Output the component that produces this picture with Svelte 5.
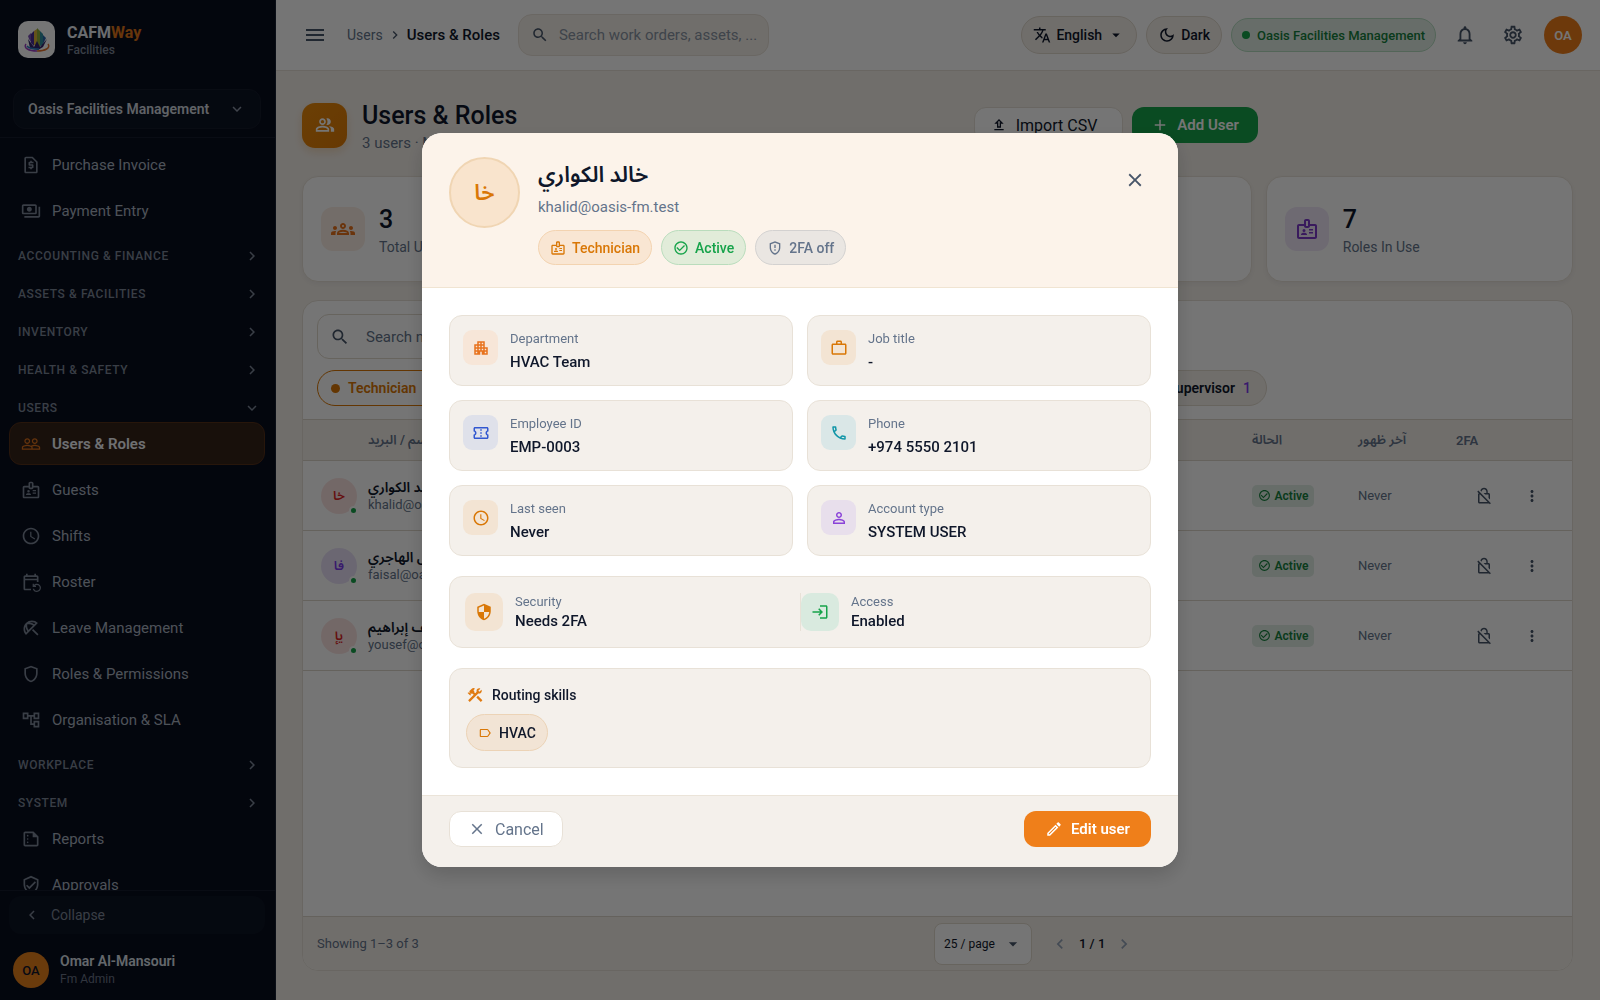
<script lang="ts">
  const icons: Record<string, string> = {
    invoice: 'M14 2H6C4.900 2 4 2.900 4 4v16c0 1.100.900 2 2 2h12c1.100 0 2-.900 2-2V8zM18 20H6V4h7.170L18 8.830zM11 17h2v-1h1c.550 0 1-.450 1-1v-3c0-.550-.450-1-1-1h-3v-1h4V8h-2V7h-2v1h-1c-.550 0-1 .450-1 1v3c0 .550.450 1 1 1h3v1H9v2h2z',
    payments: 'M19 14V6c0-1.100-.900-2-2-2H3c-1.100 0-2 .900-2 2v8c0 1.100.900 2 2 2h14c1.100 0 2-.900 2-2zm-2 0H3V6h14v8zm-7-7c-1.660 0-3 1.340-3 3s1.340 3 3 3 3-1.340 3-3-1.340-3-3-3zm13 0v11c0 1.100-.900 2-2 2H4v-2h17V7h2z',
    people: 'M16.500 13c-1.200 0-3.070.340-4.500 1-1.430-.670-3.300-1-4.500-1C5.330 13 1 14.080 1 16.250V19h22v-2.750c0-2.170-4.330-3.250-6.500-3.250zm-4 4.500h-10v-1.250c0-.540 2.560-1.750 5-1.750s5 1.210 5 1.750v1.250zm9 0H14v-1.250c0-.460-.200-.860-.520-1.220.880-.300 1.960-.530 3.020-.530 2.440 0 5 1.210 5 1.750v1.250zM7.500 12c1.930 0 3.500-1.570 3.500-3.500S9.430 5 7.500 5 4 6.570 4 8.500 5.570 12 7.500 12zm0-5.500c1.100 0 2 .900 2 2s-.900 2-2 2-2-.900-2-2 .900-2 2-2zm9 5.500c1.930 0 3.500-1.570 3.500-3.500S18.430 5 16.500 5 13 6.570 13 8.500s1.570 3.500 3.500 3.500zm0-5.500c1.100 0 2 .900 2 2s-.900 2-2 2-2-.900-2-2 .900-2 2-2z',
    peopleAlt: 'M16.670 13.130C18.040 14.060 19 15.320 19 17v3h4v-3c0-2.180-3.570-3.470-6.330-3.870zM15 12c2.210 0 4-1.790 4-4s-1.790-4-4-4c-.470 0-.910.100-1.330.240C14.500 5.270 15 6.580 15 8s-.500 2.730-1.330 3.760c.420.140.860.240 1.330.240zM9 12c2.210 0 4-1.790 4-4s-1.790-4-4-4-4 1.790-4 4 1.790 4 4 4zm0-6c1.100 0 2 .900 2 2s-.900 2-2 2-2-.900-2-2 .900-2 2-2zm0 7c-2.670 0-8 1.340-8 4v3h16v-3c0-2.660-5.330-4-8-4zm6 5H3v-.990C3.200 16.290 6.300 15 9 15s5.800 1.290 6 2v1z',
    groups: 'M4 13c1.100 0 2-.900 2-2s-.900-2-2-2-2 .900-2 2 .900 2 2 2zm1.130 1.100C4.760 14.040 4.390 14 4 14c-.990 0-1.930.210-2.780.580C.480 14.900 0 15.620 0 16.430V18h4.500v-1.610c0-.830.230-1.610.630-2.290zM20 13c1.100 0 2-.900 2-2s-.900-2-2-2-2 .900-2 2 .900 2 2 2zm4 3.430c0-.810-.480-1.530-1.220-1.850-.850-.370-1.790-.580-2.780-.580-.390 0-.760.040-1.130.100.400.680.630 1.460.630 2.290V18H24v-1.570zm-7.760-2.780c-1.170-.520-2.610-.900-4.240-.900-1.630 0-3.070.390-4.240.900C6.680 14.130 6 15.210 6 16.390V18h12v-1.610c0-1.180-.680-2.260-1.760-2.740zM8.070 16c.090-.230.130-.390.910-.690.970-.380 1.990-.560 3.020-.560s2.050.180 3.020.560c.770.300.810.460.910.690H8.070zM12 8c.550 0 1 .450 1 1s-.450 1-1 1-1-.450-1-1 .450-1 1-1m0-2c-1.660 0-3 1.340-3 3s1.340 3 3 3 3-1.340 3-3-1.340-3-3-3z',
    badge: 'M20 7h-5V4c0-1.100-.900-2-2-2h-2c-1.100 0-2 .900-2 2v3H4c-1.100 0-2 .900-2 2v11c0 1.100.900 2 2 2h16c1.100 0 2-.900 2-2V9c0-1.100-.900-2-2-2zm-9-3h2v5h-2V4zm9 16H4V9h5c0 1.100.900 2 2 2h2c1.100 0 2-.900 2-2h5v11zM9 15a1.500 1.500 0 1 0 0-3 1.500 1.500 0 0 0 0 3zm2.080 1.180c-.640-.280-1.340-.430-2.080-.430s-1.440.150-2.080.430c-.560.240-.920.780-.920 1.390V18h6v-.430c0-.610-.360-1.150-.920-1.390zM14 15h4v1.500h-4zM14 12h4v1.500h-4z',
    clock: 'M11.990 2C6.470 2 2 6.480 2 12s4.470 10 9.990 10C17.520 22 22 17.520 22 12S17.520 2 11.990 2zM12 20c-4.420 0-8-3.580-8-8s3.580-8 8-8 8 3.580 8 8-3.580 8-8 8zm.500-13H11v6l5.250 3.150.750-1.230-4.500-2.670z',
    roster: 'M21 12V6c0-1.100-.900-2-2-2h-1V2h-2v2H8V2H6v2H5C3.900 4 3 4.900 3 6v14c0 1.100.900 2 2 2h7v-2H5V10h14v2h2zm-2-4H5V6h14v2zm-3.360 12c.430 1.450 1.770 2.500 3.360 2.500 1.930 0 3.500-1.570 3.500-3.500s-1.570-3.500-3.500-3.500c-.950 0-1.820.380-2.450 1H18V18h-4v-4h1.500v1.430C16.400 14.550 17.640 14 19 14c2.760 0 5 2.240 5 5s-2.240 5-5 5c-2.420 0-4.440-1.720-4.900-4h1.540z',
    leave: 'M21 19.570l-1.427 1.428-6.442-6.442 1.430-1.428zM13.120 3c-2.580 0-5.160.980-7.140 2.950l-.010.010c-3.950 3.950-3.950 10.360 0 14.310l14.300-14.310C18.300 3.990 15.710 3 13.120 3zM6.140 17.270C5.400 16.030 5 14.610 5 13.120c0-.930.160-1.820.460-2.670.190 1.910.890 3.790 2.070 5.440l-1.390 1.380zm2.840-2.840C7.630 12.380 7.120 9.930 7.600 7.600c.580-.120 1.160-.180 1.750-.180 1.800 0 3.550.550 5.080 1.560l-5.450 5.450zm1.470-8.970c.850-.300 1.740-.460 2.670-.460 1.490 0 2.910.400 4.150 1.140l-1.390 1.390c-1.650-1.180-3.520-1.880-5.430-2.070z',
    shield: 'M12 2 4 5v6.090c0 5.050 3.410 9.760 8 10.910 4.590-1.150 8-5.860 8-10.910V5l-8-3zm6 9.090c0 4-2.550 7.700-6 8.830-3.450-1.130-6-4.820-6-8.830v-4.700l6-2.250 6 2.250v4.700z',
    tree: 'M22 11V3h-7v3H9V3H2v8h7V8h2v10h4v3h7v-8h-7v3h-2V8h2v3h7zM7 9H4V5h3v4zm10 6h3v4h-3v-4zm0-10h3v4h-3V5z',
    report: 'M15 3H5c-1.100 0-2 .900-2 2v14c0 1.100.900 2 2 2h14c1.100 0 2-.900 2-2V9l-6-6zM5 19V5h9v5h5v9H5zM8 7a1 1 0 1 0 0 2 1 1 0 0 0 0-2zM8 11a1 1 0 1 0 0 2 1 1 0 0 0 0-2zM8 15a1 1 0 1 0 0 2 1 1 0 0 0 0-2z',
    verified: 'M12 1L3 5v6c0 5.550 3.840 10.740 9 12 5.160-1.260 9-6.450 9-12V5l-9-4zm7 10c0 4.520-2.980 8.690-7 9.930-4.020-1.240-7-5.410-7-9.930V6.300l7-3.110 7 3.110V11zm-11.590.590L6 13l4 4 8-8-1.410-1.420L10 14.170z',
    right: 'M10 6L8.590 7.410 13.170 12l-4.580 4.590L10 18l6-6z',
    left: 'M15.410 7.410L14 6l-6 6 6 6 1.410-1.410L10.830 12z',
    down: 'M16.590 8.590L12 13.170 7.410 8.590 6 10l6 6 6-6z',
    menu: 'M3 18h18v-2H3v2zm0-5h18v-2H3v2zm0-7v2h18V6H3z',
    search: 'M15.500 14h-.790l-.280-.270C15.410 12.590 16 11.110 16 9.500 16 5.910 13.090 3 9.500 3S3 5.910 3 9.500 5.910 16 9.500 16c1.610 0 3.090-.590 4.230-1.570l.270.280v.790l5 4.990L20.490 19l-4.990-5zm-6 0C7.010 14 5 11.990 5 9.500S7.010 5 9.500 5 14 7.010 14 9.500 11.990 14 9.500 14z',
    translate: 'M12.870 15.070l-2.540-2.510.030-.030c1.740-1.940 2.980-4.170 3.710-6.530H17V4h-7V2H8v2H1v1.990h11.170C11.500 7.920 10.440 9.750 9 11.350 8.070 10.320 7.300 9.190 6.690 8h-2c.730 1.630 1.730 3.170 2.980 4.560l-5.090 5.020L4 19l5-5 3.110 3.110.760-2.040zM18.500 10h-2L12 22h2l1.120-3h4.750L21 22h2l-4.500-12zm-2.620 7l1.620-4.330L19.120 17h-3.240z',
    caret: 'M7 10l5 5 5-5z',
    moon: 'M9.370 5.510C9.190 6.150 9.100 6.820 9.100 7.500c0 4.080 3.320 7.400 7.400 7.400.680 0 1.350-.090 1.990-.270C17.450 17.190 14.930 19 12 19c-3.860 0-7-3.140-7-7 0-2.930 1.810-5.450 4.370-6.490zM12 3c-4.970 0-9 4.030-9 9s4.030 9 9 9 9-4.030 9-9c0-.460-.040-.920-.100-1.360-.980 1.370-2.580 2.260-4.400 2.260-2.980 0-5.400-2.420-5.400-5.400 0-1.810.890-3.420 2.260-4.400C12.920 3.040 12.460 3 12 3z',
    bell: 'M12 22c1.100 0 2-.900 2-2h-4c0 1.100.900 2 2 2zm6-6v-5c0-3.070-1.630-5.640-4.500-6.320V4c0-.830-.670-1.500-1.500-1.500s-1.500.670-1.500 1.500v.680C7.640 5.360 6 7.920 6 11v5l-2 2v1h16v-1l-2-2zm-2 1H8v-6c0-2.480 1.510-4.500 4-4.500s4 2.020 4 4.500v6z',
    gear: 'M19.430 12.980c.040-.320.070-.640.070-.980 0-.340-.030-.660-.070-.980l2.110-1.650c.190-.150.240-.420.120-.640l-2-3.460c-.090-.160-.260-.250-.440-.250-.060 0-.120.010-.170.030l-2.490 1c-.520-.400-1.080-.730-1.690-.980l-.380-2.650C14.460 2.180 14.250 2 14 2h-4c-.250 0-.460.180-.490.420l-.380 2.650c-.610.250-1.170.590-1.690.980l-2.490-1c-.060-.020-.120-.030-.180-.030-.170 0-.340.090-.430.250l-2 3.460c-.130.220-.070.490.120.640l2.110 1.650c-.040.320-.070.650-.070.980 0 .330.030.660.070.980l-2.110 1.650c-.190.150-.240.420-.120.640l2 3.460c.090.160.260.250.440.250.060 0 .120-.010.170-.030l2.490-1c.520.400 1.080.730 1.690.980l.380 2.650c.030.240.240.420.490.420h4c.250 0 .460-.180.490-.420l.380-2.650c.610-.250 1.170-.590 1.690-.980l2.490 1c.060.020.120.030.180.030.170 0 .340-.090.430-.250l2-3.460c.120-.220.070-.490-.120-.640l-2.110-1.650zm-1.980-1.710c.040.310.050.520.050.730 0 .210-.020.430-.050.730l-.140 1.130.890.700 1.080.840-.700 1.210-1.270-.510-1.040-.420-.900.680c-.430.320-.840.560-1.250.730l-1.060.430-.160 1.130-.200 1.350h-1.400l-.190-1.350-.160-1.130-1.060-.430c-.430-.180-.830-.410-1.230-.710l-.910-.700-1.060.430-1.270.510-.700-1.210 1.080-.840.890-.700-.140-1.130c-.030-.310-.050-.540-.050-.740s.020-.430.050-.730l.140-1.130-.890-.700-1.080-.840.700-1.210 1.270.510 1.040.420.900-.680c.430-.320.840-.560 1.250-.730l1.060-.430.160-1.130.200-1.350h1.390l.190 1.350.160 1.130 1.060.430c.430.180.830.410 1.230.710l.910.700 1.060-.430 1.270-.510.700 1.210-1.070.850-.890.700.140 1.130zM12 8c-2.210 0-4 1.790-4 4s1.790 4 4 4 4-1.790 4-4-1.790-4-4-4zm0 6c-1.100 0-2-.900-2-2s.900-2 2-2 2 .900 2 2-.900 2-2 2z',
    upload: 'M9 16h6v-6h4l-7-7-7 7h4v6zm3-10.170L14.170 8H13v6h-2V8H9.830L12 5.830zM5 18h14v2H5z',
    add: 'M19 13h-6v6h-2v-6H5v-2h6V5h2v6h6v2z',
    close: 'M19 6.410L17.590 5 12 10.590 6.410 5 5 6.410 10.590 12 5 17.590 6.410 19 12 13.410 17.590 19 19 17.590 13.410 12z',
    check: 'M16.590 7.580L10 14.170l-3.590-3.580L5 12l5 5 8-8zM12 2C6.480 2 2 6.480 2 12s4.480 10 10 10 10-4.480 10-10S17.520 2 12 2zm0 18c-4.420 0-8-3.580-8-8s3.580-8 8-8 8 3.580 8 8-3.580 8-8 8z',
    shieldAlert: 'M12 2 4 5v6.090c0 5.050 3.410 9.760 8 10.910 4.590-1.150 8-5.860 8-10.910V5l-8-3zm6 9.090c0 4-2.550 7.700-6 8.830-3.450-1.130-6-4.820-6-8.830v-4.700l6-2.250 6 2.250v4.700zM11 14h2v2h-2zM11 7h2v5h-2z',
    apartment: 'M17 11V3H7v4H3v14h8v-4h2v4h8V11h-4zM7 19H5v-2h2v2zm0-4H5v-2h2v2zm0-4H5V9h2v2zm4 4H9v-2h2v2zm0-4H9V9h2v2zm0-4H9V5h2v2zm4 8h-2v-2h2v2zm0-4h-2V9h2v2zm0-4h-2V5h2v2zm4 12h-2v-2h2v2zm0-4h-2v-2h2v2z',
    work: 'M14 6V4h-4v2h4zM4 8v11h16V8H4zm16-2c1.110 0 2 .890 2 2v11c0 1.110-.890 2-2 2H4c-1.110 0-2-.890-2-2l.010-11c0-1.110.880-2 1.990-2h4V4c0-1.110.890-2 2-2h4c1.110 0 2 .890 2 2v2h4z',
    ticket: 'M22 10V6c0-1.110-.900-2-2-2H4c-1.100 0-1.990.890-1.990 2v4c1.100 0 1.990.900 1.990 2s-.890 2-2 2v4c0 1.100.900 2 2 2h16c1.100 0 2-.900 2-2v-4c-1.100 0-2-.900-2-2s.900-2 2-2zm-2-1.460c-1.190.690-2 1.990-2 3.460s.810 2.770 2 3.460V18H4v-2.540c1.190-.690 2-1.990 2-3.460 0-1.480-.800-2.770-1.990-3.460L4 6h16v2.540zM11 15h2v2h-2zm0-4h2v2h-2zm0-4h2v2h-2z',
    phone: 'M6.540 5c.060.890.210 1.760.450 2.590l-1.200 1.200c-.410-1.200-.670-2.470-.760-3.790h1.510m9.860 12.020c.850.240 1.720.390 2.600.450v1.490c-1.320-.090-2.590-.350-3.800-.750l1.200-1.190M7.500 3H4c-.550 0-1 .450-1 1 0 9.390 7.610 17 17 17 .550 0 1-.450 1-1v-3.490c0-.550-.450-1-1-1-1.240 0-2.450-.200-3.570-.570-.100-.040-.210-.050-.310-.050-.260 0-.510.100-.710.290l-2.200 2.200c-2.830-1.450-5.150-3.760-6.590-6.590l2.200-2.200c.280-.280.360-.670.250-1.020C8.700 6.450 8.500 5.250 8.500 4c0-.550-.450-1-1-1z',
    person: 'M12 5.900c1.160 0 2.100.940 2.100 2.100s-.940 2.100-2.100 2.100S9.900 9.160 9.900 8s.940-2.100 2.100-2.100m0 9c2.970 0 6.100 1.460 6.100 2.100v1.100H5.900V17c0-.640 3.130-2.100 6.100-2.100M12 4C9.790 4 8 5.790 8 8s1.790 4 4 4 4-1.790 4-4-1.790-4-4-4zm0 9c-2.670 0-8 1.340-8 4v3h16v-3c0-2.660-5.330-4-8-4z',
    security: 'M12 1L3 5v6c0 5.550 3.840 10.740 9 12 5.160-1.260 9-6.450 9-12V5l-9-4zm0 10.990h7c-.530 4.120-3.280 7.790-7 8.940V12H5V6.300l7-3.110v8.800z',
    login: 'M11 7 9.600 8.400l2.600 2.600H2v2h10.200l-2.600 2.600L11 17l5-5-5-5zm9 12h-8v2h8c1.100 0 2-.900 2-2V5c0-1.100-.900-2-2-2h-8v2h8v14z',
    tools: 'M13.780 15.300l6 6 2.110-2.160-6-6zM17.500 10.100c-.390 0-.810-.050-1.140-.190L4.970 21.250 2.860 19.140l7.410-7.400L8.500 9.960l-.720.700-1.450-1.410v2.860l-.700.700-3.520-3.560.700-.700h2.810l-1.400-1.410 3.560-3.560c1.170-1.170 3.050-1.170 4.220 0L9.890 5.740l1.410 1.400-.710.710 1.790 1.780 1.820-1.880C14.060 7.420 14 7 14 6.630c0-1.970 1.560-3.520 3.500-3.520.590 0 1.110.140 1.580.420L16.410 6.200l1.500 1.500 2.670-2.670c.280.470.420.970.420 1.600 0 1.920-1.550 3.470-3.500 3.470z',
    label: 'M17.630 5.840C17.270 5.330 16.670 5 16 5L5 5.010C3.900 5.010 3 5.900 3 7v10c0 1.100.900 1.990 2 1.990L16 19c.670 0 1.270-.330 1.630-.840L22 12l-4.370-6.160zM16 17H5V7h11l3.550 5L16 17z',
    edit: 'M14.060 9.020l.920.920L5.920 19H5v-.920l9.060-9.060M17.660 3c-.250 0-.510.100-.700.290l-1.830 1.830 3.750 3.750 1.830-1.830c.390-.390.390-1.020 0-1.410l-2.340-2.340c-.200-.200-.450-.290-.710-.290zm-3.600 3.190L3 17.250V21h3.750L17.810 9.940l-3.750-3.750z',
    noLock: 'M4.410 4.810L3 6.220l2.040 2.040C4.420 8.600 4 9.250 4 10v10c0 1.100.900 2 2 2h12.780l1 1 1.410-1.410L4.410 4.810zM6 20V10h.780l10 10H6zM8.900 6c0-1.710 1.390-3.100 3.100-3.100s3.100 1.390 3.100 3.100v2h-3.660l2 2H18v4.560l2 2V10c0-1.100-.900-2-2-2h-1V6c0-2.760-2.240-5-5-5-2.320 0-4.260 1.590-4.820 3.740L8.900 6.460V6z',
    more: 'M12 8c1.100 0 2-.900 2-2s-.900-2-2-2-2 .900-2 2 .900 2 2 2zm0 2c-1.100 0-2 .900-2 2s.900 2 2 2 2-.900 2-2-.900-2-2-2zm0 6c-1.100 0-2 .900-2 2s.900 2 2 2 2-.900 2-2-.900-2-2-2z',
  };

  const nav = [
    { items: [['invoice', 'Purchase Invoice'], ['payments', 'Payment Entry']] },
    { title: 'Accounting & Finance' },
    { title: 'Assets & Facilities' },
    { title: 'Inventory' },
    { title: 'Health & Safety' },
    {
      title: 'Users',
      open: true,
      items: [
        ['people', 'Users & Roles'],
        ['badge', 'Guests'],
        ['clock', 'Shifts'],
        ['roster', 'Roster'],
        ['leave', 'Leave Management'],
        ['shield', 'Roles & Permissions'],
        ['tree', 'Organisation & SLA'],
      ],
    },
    { title: 'Workplace' },
    { title: 'System', items: [['report', 'Reports'], ['verified', 'Approvals']] },
  ];

  const stats = [
    { icon: 'groups', value: 3, label: 'Total Users', tone: 'orange' },
    { icon: 'check', value: 3, label: 'Active', tone: 'green' },
    { icon: 'login', value: 0, label: 'Online', tone: 'teal' },
    { icon: 'badge', value: 7, label: 'Roles In Use', tone: 'purple' },
  ];

  const users = [
    { initials: 'خا', name: 'خالد الكواري', email: 'khalid@oasis-fm.test', tone: 'red' },
    { initials: 'فا', name: 'فيصل الهاجري', email: 'faisal@oasis-fm.test', tone: 'violet' },
    { initials: 'يإ', name: 'يوسف إبراهيم', email: 'yousef@oasis-fm.test', tone: 'red' },
  ];

  const details = [
    { icon: 'apartment', label: 'Department', value: 'HVAC Team', tone: 'orange' },
    { icon: 'work', label: 'Job title', value: '-', tone: 'amber' },
    { icon: 'ticket', label: 'Employee ID', value: 'EMP-0003', tone: 'blue' },
    { icon: 'phone', label: 'Phone', value: '+974 5550 2101', tone: 'teal' },
    { icon: 'clock', label: 'Last seen', value: 'Never', tone: 'amber' },
    { icon: 'person', label: 'Account type', value: 'SYSTEM USER', tone: 'purple' },
  ];

  let active = $state('Users & Roles');
  let modalOpen = $state(true);
</script>

{#snippet icon(name: string, size = 20)}
  <svg class="icon" width={size} height={size} viewBox="0 0 24 24" aria-hidden="true"><path d={icons[name]} /></svg>
{/snippet}

<div class="app">
  <aside class="sidebar">
    <div class="brand">
      <div class="logo">
        <svg width="28" height="28" viewBox="0 0 28 28" aria-hidden="true">
          <path d="M6 13l-1-3 3-3v9z" fill="#7a4fb5" />
          <path d="M8 8l3-3v15l-3-3z" fill="#4b2f96" />
          <path d="M11 5l3-2v17l-3-1z" fill="#d9b23a" />
          <path d="M14 2l3 3v16l-3-1z" fill="#8fae3a" />
          <path d="M17 5l3 3v11l-3 1z" fill="#2f8f9f" />
          <path d="M20 9l3 3-3 6z" fill="#2563a8" />
          <path d="M5 13l6 8 3-6 3 6 7-8-4 8-5 3-8-2z" fill="#33246e" />
          <path d="M3 18c-3 4 3 7 11 7" fill="none" stroke="#9a3fc0" stroke-width="1.500" />
          <path d="M14 25c8 0 14-3 11-7" fill="none" stroke="#e0702c" stroke-width="1.500" />
          <path d="M4 20c2 3 7 3 12 3" fill="none" stroke="#2b7fc0" stroke-width="1.500" />
        </svg>
      </div>
      <div>
        <div class="brand-name">CAFM<span>Way</span></div>
        <div class="brand-sub">Facilities</div>
      </div>
    </div>
    <button class="company">Oasis Facilities Management {@render icon('down', 18)}</button>

    <nav>
      {#each nav as group}
        {#if group.title}
          <button class="group-title">{group.title} {@render icon(group.open ? 'down' : 'right', 18)}</button>
        {/if}
        {#if group.items}
          <div class="group-items">
            {#each group.items as [glyph, label]}
              <a href="#{glyph}" class="nav-item" class:active={active === label} onclick={() => (active = label)}>
                {@render icon(glyph)}{label}
              </a>
            {/each}
          </div>
        {/if}
      {/each}
    </nav>

    <div class="side-foot">
      <button class="collapse">{@render icon('left', 18)} Collapse</button>
      <div class="me">
        <span class="me-avatar">OA</span>
        <div>
          <div class="me-name">Omar Al-Mansouri</div>
          <div class="me-role">Fm Admin</div>
        </div>
      </div>
    </div>
  </aside>

  <div class="page">
    <header class="topbar">
      <button class="icon-btn menu" aria-label="Menu">{@render icon('menu', 24)}</button>
      <div class="crumbs">
        <a href="#users">Users</a>
        {@render icon('right', 16)}
        <strong>Users & Roles</strong>
      </div>
      <label class="global-search">
        {@render icon('search', 18)}
        <input type="text" placeholder="Search work orders, assets, ..." aria-label="Search everything" />
      </label>
      <div class="top-actions">
        <button class="pill">{@render icon('translate', 18)} English {@render icon('caret', 18)}</button>
        <button class="pill">{@render icon('moon', 18)} Dark</button>
        <span class="tenant"><i></i>Oasis Facilities Management</span>
        <button class="icon-btn" aria-label="Notifications">{@render icon('bell', 22)}</button>
        <button class="icon-btn" aria-label="Settings">{@render icon('gear', 22)}</button>
        <button class="top-avatar">OA</button>
      </div>
    </header>

    <main>
      <div class="page-head">
        <span class="page-icon">{@render icon('peopleAlt', 20)}</span>
        <div class="page-title">
          <h1>Users & Roles</h1>
          <p>3 users · Manage access</p>
        </div>
        <button class="btn outline">{@render icon('upload', 16)} Import CSV</button>
        <button class="btn add">{@render icon('add', 18)} Add User</button>
      </div>

      <div class="stats">
        {#each stats as s}
          <div class="stat">
            <span class="stat-icon {s.tone}">{@render icon(s.icon, 24)}</span>
            <div class="stat-text">
              <div class="stat-value">{s.value}</div>
              <div class="stat-label">{s.label}</div>
            </div>
          </div>
        {/each}
      </div>

      <section class="panel">
        <div class="filters">
          <label class="user-search">
            {@render icon('search', 20)}
            <input type="text" placeholder="Search name or email" aria-label="Search users" />
          </label>
          <div class="chips">
            <button class="chip selected"><i></i>Technician <b>3</b></button>
            <button class="chip"><i></i>Supervisor <b>1</b></button>
          </div>
        </div>

        <table>
          <thead>
            <tr>
              <th class="col-name"><bdi>الاسم / البريد</bdi></th>
              <th class="col-status">الحالة</th>
              <th class="col-seen">آخر ظهور</th>
              <th class="col-2fa">2FA</th>
              <th class="col-more" aria-label="Actions"></th>
            </tr>
          </thead>
          <tbody>
            {#each users as u}
              <tr>
                <td>
                  <div class="user">
                    <span class="avatar {u.tone}">{u.initials}<i></i></span>
                    <div>
                      <div class="user-name"><bdi>{u.name}</bdi></div>
                      <div class="user-email">{u.email}</div>
                    </div>
                  </div>
                </td>
                <td><span class="status">{@render icon('check', 13)} Active</span></td>
                <td class="seen">Never</td>
                <td class="lock">{@render icon('noLock', 18)}</td>
                <td class="more"><button class="icon-btn" aria-label="More">{@render icon('more', 18)}</button></td>
              </tr>
            {/each}
          </tbody>
        </table>

        <footer class="pagination">
          <span class="showing">Showing 1–3 of 3</span>
          <div class="pager">
            <div class="page-size">
              <select aria-label="Rows per page"><option>25 / page</option></select>
              {@render icon('caret', 20)}
            </div>
            <button class="icon-btn" aria-label="Previous page">{@render icon('left', 20)}</button>
            <span class="page-no">1 / 1</span>
            <button class="icon-btn" aria-label="Next page">{@render icon('right', 20)}</button>
          </div>
        </footer>
      </section>
    </main>
  </div>
</div>

{#if modalOpen}
  <div class="overlay">
    <div class="modal" role="dialog" aria-modal="true" aria-labelledby="user-title">
      <div class="modal-header">
        <span class="big-avatar">خا</span>
        <div class="who">
          <h2 id="user-title"><bdi>خالد الكواري</bdi></h2>
          <p>khalid@oasis-fm.test</p>
          <div class="tags">
            <span class="tag tag-role">{@render icon('badge', 16)} Technician</span>
            <span class="tag tag-active">{@render icon('check', 16)} Active</span>
            <span class="tag tag-off">{@render icon('shieldAlert', 16)} 2FA off</span>
          </div>
        </div>
        <button class="icon-btn modal-close" aria-label="Close" onclick={() => (modalOpen = false)}>
          {@render icon('close', 22)}
        </button>
      </div>

      <div class="modal-body">
        <div class="details">
          {#each details as d}
            <div class="tile">
              <span class="tile-icon {d.tone}">{@render icon(d.icon, 18)}</span>
              <div>
                <div class="tile-label">{d.label}</div>
                <div class="tile-value">{d.value}</div>
              </div>
            </div>
          {/each}
        </div>

        <div class="access">
          <div class="access-half">
            <span class="access-icon amber">{@render icon('security', 18)}</span>
            <div>
              <div class="tile-label">Security</div>
              <div class="access-value">Needs 2FA</div>
            </div>
          </div>
          <div class="access-half divided">
            <span class="access-icon green">{@render icon('login', 18)}</span>
            <div>
              <div class="tile-label">Access</div>
              <div class="access-value">Enabled</div>
            </div>
          </div>
        </div>

        <div class="skills">
          <div class="skills-title">{@render icon('tools', 18)} Routing skills</div>
          <span class="skill">{@render icon('label', 14)} HVAC</span>
        </div>
      </div>

      <div class="modal-actions">
        <button class="btn cancel" onclick={() => (modalOpen = false)}>{@render icon('close', 18)} Cancel</button>
        <button class="btn edit">{@render icon('edit', 18)} Edit user</button>
      </div>
    </div>
  </div>
{/if}

<style>
  :global(body) {
    background: #f4f0ea;
    font-family: Roboto, 'Noto Sans Arabic', 'Noto Sans', 'DejaVu Sans', sans-serif;
    color: #0f172a;
  }

  * {
    box-sizing: border-box;
  }

  h1, h2, p {
    margin: 0;
  }

  button, input, select {
    font-family: inherit;
    color: inherit;
  }

  button {
    cursor: pointer;
    border: none;
    background: none;
    padding: 0;
    white-space: nowrap;
  }

  .icon {
    fill: currentColor;
    flex: none;
    display: block;
  }

  .app {
    display: flex;
    height: 100vh;
    overflow: hidden;
  }

  /* sidebar */
  .sidebar {
    width: 276px;
    flex: none;
    display: flex;
    flex-direction: column;
    background: #080e1e;
    border-right: 1px solid #1a2233;
    color: #a3adbd;
  }

  .brand {
    display: flex;
    align-items: center;
    gap: 12px;
    padding: 21px 18px 31px;
  }

  .logo {
    width: 37px;
    height: 37px;
    border-radius: 10px;
    background: #ffffff;
    display: grid;
    place-items: center;
  }

  .brand-name {
    font-size: 16px;
    line-height: 20px;
    font-weight: 700;
    color: #e8ecf1;
  }

  .brand-name span {
    color: #e0761a;
  }

  .brand-sub {
    font-size: 12px;
    line-height: 14px;
    font-weight: 500;
    color: #7d8798;
  }

  .company {
    margin: 0 14px 8px 13px;
    height: 40px;
    padding: 0 14px;
    display: flex;
    align-items: center;
    justify-content: space-between;
    border-radius: 12px;
    border: 1px solid #141b2b;
    background: #0d1424;
    font-size: 14px;
    font-weight: 600;
    color: #d0d6df;
  }

  .company .icon {
    color: #8b95a6;
  }

  nav {
    flex: 1;
    min-height: 0;
    overflow: hidden;
    border-top: 1px solid #151c2c;
    padding: 5px 10px 0 9px;
  }

  .group-title {
    width: 100%;
    height: 28px;
    margin-top: 10px;
    padding: 0 4px 0 9px;
    display: flex;
    align-items: center;
    justify-content: space-between;
    font-size: 12px;
    font-weight: 500;
    letter-spacing: 0.05em;
    text-transform: uppercase;
    color: #7d8798;
  }

  .group-items {
    display: flex;
    flex-direction: column;
    gap: 3px;
  }

  .nav-item {
    height: 43px;
    padding: 0 11px;
    display: flex;
    align-items: center;
    gap: 11px;
    border: 1px solid transparent;
    border-radius: 12px;
    font-size: 15px;
    color: #a9b2c0;
    text-decoration: none;
  }

  .nav-item .icon {
    color: #7d8798;
  }

  .nav-item.active {
    background: #36231a;
    border-color: #55301a;
    color: #f1f5f9;
    font-weight: 600;
  }

  .nav-item.active .icon {
    color: #d9701c;
  }

  .side-foot {
    border-top: 1px solid #151c2c;
    padding: 5px 10px 12px 9px;
  }

  .collapse {
    width: 100%;
    height: 38px;
    padding: 0 14px;
    display: flex;
    align-items: center;
    gap: 10px;
    border-radius: 12px;
    background: #0d1424;
    font-size: 14px;
    color: #7d8798;
  }

  .me {
    display: flex;
    align-items: center;
    gap: 11px;
    padding: 18px 4px 0;
  }

  .me-avatar {
    width: 36px;
    height: 36px;
    border-radius: 50%;
    background: #e8801c;
    color: #10162a;
    display: grid;
    place-items: center;
    font-size: 13px;
    font-weight: 500;
  }

  .me-name {
    font-size: 14px;
    line-height: 18px;
    font-weight: 600;
    color: #dbe1ea;
  }

  .me-role {
    font-size: 12px;
    line-height: 18px;
    color: #6b7588;
  }

  /* top bar */
  .page {
    flex: 1;
    min-width: 0;
    display: flex;
    flex-direction: column;
  }

  .topbar {
    height: 71px;
    flex: none;
    display: flex;
    align-items: center;
    padding: 0 18px 0 27px;
    background: #ffffff;
    border-bottom: 1px solid #e5dfd5;
  }

  .icon-btn {
    display: grid;
    place-items: center;
    color: #475569;
  }

  .crumbs {
    display: flex;
    align-items: center;
    gap: 4px;
    margin: 0 18px 0 20px;
    font-size: 14px;
    white-space: nowrap;
  }

  .crumbs a {
    color: #64748b;
    text-decoration: none;
  }

  .crumbs .icon {
    color: #475569;
  }

  .crumbs strong {
    font-size: 15px;
    font-weight: 500;
  }

  .global-search {
    width: 251px;
    height: 42px;
    padding: 0 8px 0 12px;
    display: flex;
    align-items: center;
    gap: 10px;
    border: 1px solid #e8e1d7;
    border-radius: 14px;
    background: #f4f0ea;
    color: #475569;
  }

  .global-search input,
  .user-search input {
    flex: 1;
    min-width: 0;
    border: none;
    outline: none;
    background: none;
    padding: 0;
    font-size: 15px;
    text-overflow: ellipsis;
  }

  .global-search input::placeholder {
    color: #8a94a3;
  }

  .user-search input::placeholder {
    color: #64748b;
  }

  .top-actions {
    margin-left: auto;
    display: flex;
    align-items: center;
    gap: 9px;
  }

  .top-actions .icon-btn {
    width: 39px;
    height: 38px;
  }

  .pill {
    height: 38px;
    padding: 0 11px;
    display: flex;
    align-items: center;
    gap: 5px;
    border: 1px solid #e0d9cd;
    border-radius: 19px;
    background: #f4f0ea;
    font-size: 14px;
    font-weight: 500;
  }

  .tenant {
    height: 34px;
    padding: 0 10px;
    display: flex;
    align-items: center;
    gap: 7px;
    border: 1px solid #b5dcc1;
    border-radius: 17px;
    background: #e0eee4;
    color: #15803d;
    font-size: 13px;
    font-weight: 500;
    white-space: nowrap;
  }

  .tenant i {
    width: 8px;
    height: 8px;
    border-radius: 50%;
    background: #16a34a;
  }

  .top-avatar {
    width: 38px;
    height: 38px;
    margin-left: 3px;
    border-radius: 50%;
    background: #ed7d1a;
    color: #ffffff;
    font-size: 13px;
    font-weight: 600;
  }

  /* page content */
  main {
    flex: 1;
    min-height: 0;
    display: flex;
    flex-direction: column;
    padding: 29px 27px 29px 26px;
  }

  .page-head {
    display: flex;
    align-items: center;
    padding-right: 315px;
    height: 50px;
  }

  .page-icon {
    width: 45px;
    height: 45px;
    border-radius: 13px;
    background: linear-gradient(135deg, #e88a0c, #e07b06);
    color: #ffffff;
    display: grid;
    place-items: center;
    box-shadow: 0 4px 10px rgba(217, 119, 6, 0.2);
  }

  .page-title {
    flex: 1;
    margin-left: 15px;
    padding-top: 3px;
  }

  .page-title h1 {
    font-size: 25px;
    line-height: 30px;
    font-weight: 500;
  }

  .page-title p {
    margin-top: 2px;
    font-size: 15px;
    line-height: 20px;
    color: #64748b;
  }

  .btn {
    height: 36px;
    display: flex;
    align-items: center;
    justify-content: center;
    border-radius: 12px;
    font-size: 16px;
  }

  .btn.outline {
    gap: 9px;
    padding: 0 25px 0 16px;
    border: 1px solid #e5dfd5;
    background: #ffffff;
  }

  .btn.add {
    gap: 8px;
    margin-left: 9px;
    padding: 0 19px;
    background: #16a34a;
    color: #ffffff;
    font-size: 15px;
    font-weight: 600;
  }

  .stats {
    display: grid;
    grid-template-columns: repeat(4, 1fr);
    gap: 14px;
    margin-top: 26px;
  }

  .stat {
    height: 106px;
    padding: 0 18px;
    display: flex;
    align-items: center;
    gap: 14px;
    background: #ffffff;
    border: 1px solid #e8e1d7;
    border-radius: 16px;
    box-shadow: 0 2px 6px rgba(15, 23, 42, 0.05);
  }

  .stat-text {
    padding-top: 4px;
  }

  .stat-value {
    font-size: 25px;
    line-height: 28px;
    font-weight: 500;
  }

  .stat-label {
    margin-top: 3px;
    font-size: 14px;
    line-height: 20px;
    color: #64748b;
  }

  .orange {
    background: #f7e6d8;
    color: #e8721c;
  }

  .amber {
    background: #f3e4d3;
    color: #d97706;
  }

  .green {
    background: #d9eadf;
    color: #16a34a;
  }

  .teal {
    background: #dae7e7;
    color: #1296a8;
  }

  .blue {
    background: #dfe1ea;
    color: #3157d0;
  }

  .purple {
    background: #e8dfec;
    color: #8a42d8;
  }

  .stat-icon {
    width: 44px;
    height: 44px;
    border-radius: 12px;
    display: grid;
    place-items: center;
  }

  .stat-icon.orange {
    background: #fbeee4;
  }

  .stat-icon.purple {
    background: #f0e7f8;
    color: #7c3acb;
  }

  .panel {
    flex: 1;
    min-height: 0;
    margin-top: 18px;
    display: flex;
    flex-direction: column;
    background: #ffffff;
    border: 1px solid #e5dfd5;
    border-radius: 16px;
    overflow: hidden;
  }

  .filters {
    padding: 13px 14px;
  }

  .user-search {
    width: 480px;
    height: 45px;
    padding: 0 12px;
    display: flex;
    align-items: center;
    gap: 16px;
    border: 1px solid #e0d9cd;
    border-radius: 12px;
    color: #475569;
  }

  .chips {
    max-width: 950px;
    margin-top: 11px;
    display: flex;
    justify-content: space-between;
  }

  .chip {
    height: 36px;
    padding: 0 15px 0 13px;
    display: flex;
    align-items: center;
    gap: 8px;
    border: 1px solid #e0d9cd;
    border-radius: 18px;
    background: #f4f0ea;
    font-size: 14px;
    font-weight: 600;
  }

  .chip i {
    width: 9px;
    height: 9px;
    border-radius: 50%;
    background: #7c3aed;
  }

  .chip b {
    font-weight: 500;
    color: #7c3aed;
  }

  .chip.selected {
    border-color: #d97706;
    background: #ffffff;
    color: #d97706;
  }

  .chip.selected i {
    background: #d97706;
  }

  .chip.selected b {
    color: #d97706;
  }

  table {
    width: 100%;
    border-collapse: collapse;
    table-layout: fixed;
  }

  th {
    height: 41px;
    padding: 0;
    background: #f4f0ea;
    border-top: 1px solid #ddd6ca;
    border-bottom: 1px solid #ddd6ca;
    font-size: 13px;
    font-weight: 600;
    text-align: left;
    color: #64748b;
  }

  .col-name {
    padding-left: 65px;
  }

  .col-status {
    width: 106px;
  }

  .col-seen {
    width: 98px;
  }

  .col-2fa {
    width: 56px;
  }

  .col-more {
    width: 60px;
  }

  td {
    height: 70px;
    padding: 0;
    border-bottom: 1px solid #ddd6ca;
  }

  .user {
    display: flex;
    align-items: center;
    gap: 11px;
    padding-left: 18px;
  }

  .avatar {
    position: relative;
    width: 36px;
    height: 36px;
    border-radius: 50%;
    display: grid;
    place-items: center;
    font-size: 13px;
    font-weight: 600;
  }

  .avatar.red {
    background: #fbe3e1;
    color: #dc2626;
  }

  .avatar.violet {
    background: #e9e1f8;
    color: #7c3aed;
  }

  .avatar i {
    position: absolute;
    right: -1px;
    bottom: -1px;
    width: 9px;
    height: 9px;
    border: 2px solid #ffffff;
    border-radius: 50%;
    background: #16a34a;
  }

  .user-name {
    font-size: 14px;
    line-height: 18px;
    font-weight: 600;
  }

  .user-email {
    font-size: 13px;
    line-height: 18px;
    color: #64748b;
  }

  .status {
    height: 22px;
    width: 62px;
    display: flex;
    align-items: center;
    justify-content: center;
    gap: 4px;
    border-radius: 5px;
    background: #e0eee5;
    color: #15803d;
    font-size: 12px;
    font-weight: 600;
  }

  .seen {
    font-size: 13px;
    color: #64748b;
  }

  .lock .icon {
    margin: 0 auto;
    color: #475569;
  }

  .more .icon-btn {
    margin-left: 11px;
  }

  .pagination {
    margin-top: auto;
    height: 54px;
    padding: 0 21px 0 14px;
    display: grid;
    grid-template-columns: 1fr 1fr;
    align-items: center;
    background: #f4f0ea;
    border-top: 1px solid #ddd6ca;
  }

  .showing {
    font-size: 13px;
    color: #64748b;
  }

  .pager {
    display: flex;
    align-items: center;
  }

  .page-size {
    display: grid;
    align-items: center;
    margin-right: 18px;
  }

  .page-size select {
    grid-area: 1 / 1;
    width: 98px;
    height: 42px;
    padding: 0 9px;
    appearance: none;
    border: 1px solid #e0d9cd;
    border-radius: 8px;
    background: #ffffff;
    font-size: 12px;
    outline: none;
  }

  .page-size .icon {
    grid-area: 1 / 1;
    justify-self: end;
    margin-right: 9px;
    color: #475569;
    pointer-events: none;
  }

  .pager .icon-btn {
    color: #94a3b8;
  }

  .page-no {
    margin: 0 9px;
    font-size: 13px;
    font-weight: 500;
  }

  /* dialog */
  .overlay {
    position: fixed;
    inset: 0;
    display: grid;
    place-items: center;
    background: rgba(0, 0, 0, 0.54);
  }

  .modal {
    width: 756px;
    border-radius: 20px;
    overflow: hidden;
    background: #ffffff;
    box-shadow: 0 8px 20px rgba(0, 0, 0, 0.16);
  }

  .modal-header {
    display: flex;
    gap: 18px;
    padding: 24px 27px 22px;
    background: #fcf3ea;
    border-bottom: 1px solid #f0e4d2;
  }

  .big-avatar {
    width: 71px;
    height: 71px;
    border: 2px solid #f0d5b3;
    border-radius: 50%;
    background: #f9e4cd;
    color: #d97706;
    display: grid;
    place-items: center;
    font-size: 22px;
    font-weight: 600;
  }

  .who {
    flex: 1;
  }

  .who h2 {
    font-size: 22px;
    line-height: 36px;
    font-weight: 600;
  }

  .who p {
    margin: 4px 0 13px;
    font-size: 15px;
    line-height: 20px;
    color: #64748b;
  }

  .tags {
    display: flex;
    gap: 9px;
  }

  .tag {
    height: 35px;
    padding: 0 11px;
    display: flex;
    align-items: center;
    gap: 6px;
    border: 1px solid;
    border-radius: 18px;
    font-size: 14px;
    font-weight: 500;
  }

  .tag-role {
    background: #f9e6d3;
    border-color: #f3d3b0;
    color: #d97706;
  }

  .tag-active {
    background: #e1ecd9;
    border-color: #b9dcbc;
    color: #16a34a;
  }

  .tag-off {
    background: #eae6e2;
    border-color: #d3d1d0;
    color: #64748b;
  }

  .modal-close {
    width: 32px;
    height: 32px;
    margin-top: 7px;
  }

  .modal-body {
    display: flex;
    flex-direction: column;
    gap: 20px;
    padding: 27px;
  }

  .details {
    display: grid;
    grid-template-columns: 1fr 1fr;
    gap: 14px;
  }

  .tile {
    height: 71px;
    padding: 14px 13px;
    display: flex;
    gap: 12px;
  }

  .tile,
  .access,
  .skills {
    border: 1px solid #e8e1d7;
    border-radius: 13px;
    background: #f4f0eb;
  }

  .tile-icon {
    width: 35px;
    height: 35px;
    border-radius: 9px;
    display: grid;
    place-items: center;
  }

  .tile-label {
    font-size: 13px;
    line-height: 18px;
    color: #64748b;
  }

  .tile-value {
    margin-top: 3px;
    font-size: 15px;
    line-height: 22px;
    font-weight: 500;
  }

  .access {
    display: grid;
    grid-template-columns: 1fr 1fr;
    padding: 16px 15px;
  }

  .access-half {
    display: flex;
    align-items: center;
    gap: 12px;
  }

  .divided {
    border-left: 1px solid #e8e1d7;
  }

  .access-icon {
    width: 38px;
    height: 38px;
    border-radius: 10px;
    display: grid;
    place-items: center;
  }

  .access-value {
    font-size: 15px;
    line-height: 20px;
    font-weight: 500;
  }

  .skills {
    padding: 16px;
  }

  .skills-title {
    display: flex;
    align-items: center;
    gap: 8px;
    font-size: 14px;
    line-height: 20px;
    font-weight: 500;
  }

  .skills-title .icon {
    color: #e07b12;
  }

  .skill {
    width: max-content;
    height: 37px;
    margin-top: 9px;
    padding: 0 11px;
    display: flex;
    align-items: center;
    gap: 7px;
    border: 1px solid #ecd3b6;
    border-radius: 19px;
    background: #f2e4d5;
    font-size: 14px;
    font-weight: 500;
  }

  .skill .icon {
    color: #d97706;
  }

  .modal-actions {
    display: flex;
    justify-content: space-between;
    padding: 15px 27px 20px;
    background: #f4f0eb;
    border-top: 1px solid #ebe4d9;
  }

  .cancel {
    gap: 9px;
    padding: 0 18px;
    border: 1px solid #e8e1d7;
    background: #ffffff;
    color: #64748b;
  }

  .edit {
    gap: 8px;
    padding: 0 21px;
    background: #ef7f1a;
    color: #ffffff;
    font-size: 15px;
    font-weight: 600;
  }
</style>
